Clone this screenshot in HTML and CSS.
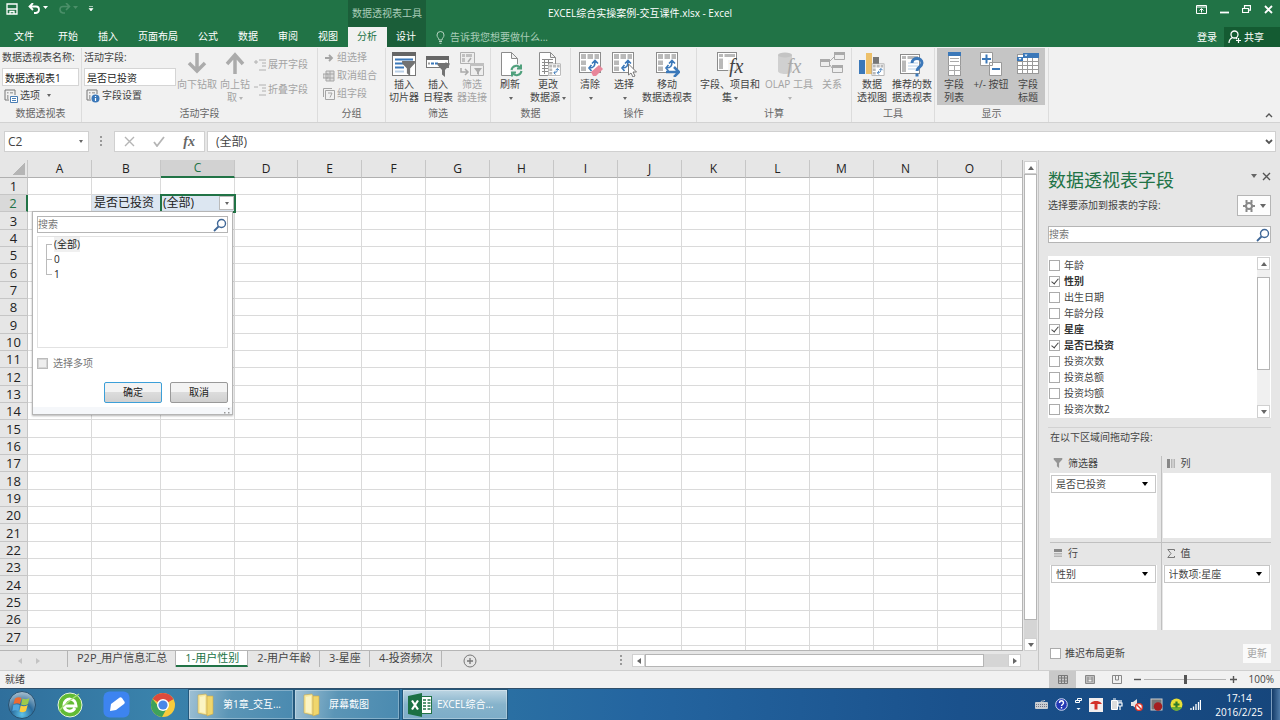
FILE: index.html
```html
<!DOCTYPE html>
<html lang="zh-CN">
<head>
    <meta charset="UTF-8">
    <meta name="viewport" content="width=device-width, initial-scale=1.0">
    <title>EXCEL综合实操案例-交互课件.xlsx - Excel</title>
    <link rel="stylesheet" href="styles.css">
</head>
<body>

<!-- Общие значки -->
<svg class="defs" width="0" height="0">
    <symbol id="pivot" viewBox="0 0 26 26">
        <rect x="2.500" y="1.500" width="21" height="20" fill="#fff" stroke="#8c8c8c"/>
        <path d="M4 3h5v5H4zM10.500 3H16v5h-5.500zM17.500 3H22v5h-4.500zM4 9.500h5V14H4zM4 15.500h5V20H4z" fill="#b9b9b9"/>
        <path d="M12 17c5 0 6-2 6-7M14.500 14L12 17l2.500 3M15 12.500l3-3 3 3" fill="none" stroke="#3b78b9" stroke-width="1.600"/>
    </symbol>
    <symbol id="funnel" viewBox="0 0 12 14">
        <path d="M0 0h12v2L7.500 7v7L4.500 11.500V7L0 2z" fill="#737373"/>
    </symbol>
    <symbol id="search" viewBox="0 0 14 14">
        <circle cx="8.500" cy="5.500" r="4" fill="none" stroke="#3f6797" stroke-width="1.400"/>
        <path d="M5.500 8.500L1 13" stroke="#3f6797" stroke-width="1.800"/>
    </symbol>
    <symbol id="folder" viewBox="0 0 24 24">
        <path d="M4 2l8-1 1 2v19l-9-2z" fill="#f7e9a0" stroke="#c9a94a" stroke-width=".6"/>
        <path d="M13 3l6 0v18l-6 2z" fill="#f0d66c" stroke="#c9a94a" stroke-width=".6"/>
        <path d="M6 4l5-1v17l-5-1z" fill="#fbf4c4"/>
    </symbol>
</svg>

<header class="header">
    <div class="quick">
        <button type="button" aria-label="保存"><svg width="12" height="12" viewBox="0 0 12 12"><path d="M1 1h10v10H1zM1 6h10M4 11V8.500h4V11" fill="none" stroke="#fff" stroke-width="1.300"/></svg></button>
        <button type="button" aria-label="撤消"><svg width="20" height="12" viewBox="0 0 20 12"><path d="M5 0L1.500 3.500 5 7M2 3.500h6c4 0 4 6 0 6.500H6" fill="none" stroke="#fff" stroke-width="1.800"/><path d="M15 3h5l-2.500 3z" fill="#fff"/></svg></button>
        <button type="button" aria-label="恢复" disabled><svg width="20" height="12" viewBox="0 0 20 12"><path d="M8 0l3.500 3.500L8 7M11 3.500H5c-4 0-4 6 0 6.500h2" fill="none" stroke="#4b8f69" stroke-width="1.600"/><path d="M15 3h5l-2.500 3z" fill="#4b8f69"/></svg></button>
        <button type="button" aria-label="自定义"><svg width="6" height="6" viewBox="0 0 6 6"><path d="M1 .5h4M1 2.500h4L3 5z" stroke="#fff" stroke-width=".6" fill="#fff"/></svg></button>
    </div>
    <div class="context-title">数据透视表工具</div>
    <h1 class="title">EXCEL综合实操案例-交互课件.xlsx - Excel</h1>
    <div class="window-buttons">
        <button type="button" aria-label="功能区显示选项"><svg width="11" height="9" viewBox="0 0 11 9"><path d="M.5.5h10v8H.5zM.5 2h10M5.500 7.500V4M3.500 5.500l2-2 2 2" fill="none" stroke="#fff"/></svg></button>
        <button type="button" aria-label="最小化"><svg width="9" height="9" viewBox="0 0 9 9"><path d="M0 7.500h9" stroke="#fff" stroke-width="1.800"/></svg></button>
        <button type="button" aria-label="还原"><svg width="9" height="9" viewBox="0 0 9 9"><path d="M.5 3.500h6v4h-6zM2.500 3V.7h6v4.500H7" fill="none" stroke="#fff" stroke-width="1.200"/></svg></button>
        <button type="button" aria-label="关闭"><svg width="9" height="9" viewBox="0 0 9 9"><path d="M1 1l7 7M8 1L1 8" stroke="#fff" stroke-width="1.800"/></svg></button>
    </div>
    <nav class="tabs">
        <a href="#" class="file">文件</a>
        <a href="#">开始</a>
        <a href="#">插入</a>
        <a href="#">页面布局</a>
        <a href="#">公式</a>
        <a href="#">数据</a>
        <a href="#">审阅</a>
        <a href="#">视图</a>
    </nav>
    <nav class="context-tabs">
        <a href="#" class="active">分析</a>
        <a href="#">设计</a>
    </nav>
    <div class="tell-me">
        <label for="tell"><svg width="9" height="13" viewBox="0 0 9 13"><path d="M3 9C3 7 1 6.500 1 4a3.500 3.500 0 0 1 7 0c0 2.500-2 3-2 5zM3 10.500h3M3.500 12.300h2" fill="none" stroke="#b5d3c1"/></svg></label>
        <input type="text" id="tell" placeholder="告诉我您想要做什么..." aria-label="告诉我">
        <a href="#" class="login">登录</a>
        <button type="button" class="share"><svg width="14" height="14" viewBox="0 0 14 14"><circle cx="6.500" cy="4.500" r="3.500" fill="none" stroke="#fff" stroke-width="1.300"/><path d="M1 13c0-3 1.500-4.500 3.500-5.500M8 8l1 1M10.500 8v5M8 10.500h5" fill="none" stroke="#fff" stroke-width="1.200"/></svg>共享</button>
    </div>
</header>

<div class="ribbon">
    <section class="group group-name">
        <div class="group-main stack">
            <label for="pivotName">数据透视表名称:</label>
            <input type="text" id="pivotName" value="数据透视表1">
            <button type="button" class="small"><svg width="14" height="14" viewBox="0 0 14 14"><path d="M1 1h10v5M1 1v10h4" fill="none" stroke="#777"/><path d="M3 3h1.500v1.500H3zM6 3h3v1.500H6zM3 6h1.500v4H3z" fill="#aaa"/><path d="M6.500 7.500h7v6h-7zM8 9.500h4M8 11.500h4" fill="#fff" stroke="#4c7fb5"/></svg>选项<i class="caret"></i></button>
        </div>
        <h2>数据透视表</h2>
    </section>

    <section class="group group-field">
        <div class="group-main">
            <div class="stack">
                <label for="activeField">活动字段:</label>
                <input type="text" id="activeField" value="是否已投资">
                <button type="button" class="small"><svg width="14" height="14" viewBox="0 0 14 14"><path d="M1 1h10v4M1 1v10h4" fill="none" stroke="#777"/><path d="M3 3h1.500v1.500H3zM6 3h3v1.500H6zM3 6h1.500v4H3z" fill="#aaa"/><circle cx="9.500" cy="9.500" r="4" fill="#3b78b9"/><path d="M9.500 9v3M9.500 7v1" stroke="#fff" stroke-width="1.200"/></svg>字段设置</button>
            </div>
            <button type="button" class="big" disabled><svg width="26" height="26" viewBox="0 0 26 26"><path d="M13 2v18M5 12l8 8 8-8" fill="none" stroke="#ababab" stroke-width="3.500"/></svg><span>向下钻取</span></button>
            <button type="button" class="big" disabled><svg width="26" height="26" viewBox="0 0 26 26"><path d="M13 23V4M5 13l8-9 8 9" fill="none" stroke="#ababab" stroke-width="3.500"/></svg><span>向上钻<br>取<i class="caret"></i></span></button>
            <div class="pair">
                <button type="button" class="small" disabled><svg width="12" height="12" viewBox="0 0 12 12"><path d="M0 3h4M2 1v4M5 1h7M8 4h4M8 7h4M5 11h7" fill="none" stroke="#b0b0b0"/></svg>展开字段</button>
                <button type="button" class="small" disabled><svg width="12" height="12" viewBox="0 0 12 12"><path d="M0 3h4M5 1h7M8 4h4M8 7h4M5 11h7" fill="none" stroke="#b0b0b0"/></svg>折叠字段</button>
            </div>
        </div>
        <h2>活动字段</h2>
    </section>

    <section class="group group-set">
        <div class="group-main trio">
            <button type="button" class="small" disabled><svg width="12" height="12" viewBox="0 0 12 12"><path d="M2 6h7M6 3l3 3-3 3" fill="none" stroke="#a5a5a5" stroke-width="1.800"/></svg>组选择</button>
            <button type="button" class="small" disabled><svg width="12" height="12" viewBox="0 0 12 12"><path d="M3 1h8v10H3zM3 4h8M3 8h8M7 1v10M0 4h5v4H0z" fill="#ddd" stroke="#a5a5a5"/></svg>取消组合</button>
            <button type="button" class="small" disabled><svg width="12" height="12" viewBox="0 0 12 12"><path d="M.5 9V.5H9M2.500 2.500h9v9h-9zM5 5h4l-2 4.500" fill="none" stroke="#a5a5a5"/></svg>组字段</button>
        </div>
        <h2>分组</h2>
    </section>

    <section class="group group-filter">
        <div class="group-main">
            <button type="button" class="big"><svg width="26" height="26" viewBox="0 0 26 26"><rect x="1.500" y="1.500" width="23" height="23" fill="#fff" stroke="#777"/><path d="M1 1h24v4H1z" fill="#666"/><path d="M4 8.500h18M4 12.500h9M4 16.500h9" stroke="#3b78b9" stroke-width="2"/><path d="M4 20.500h9" stroke="#b8cfe6" stroke-width="2"/><use href="#funnel" x="11" y="10" width="13" height="15"/></svg><span>插入<br>切片器</span></button>
            <button type="button" class="big"><svg width="26" height="26" viewBox="0 0 26 26"><rect x="1.500" y="5.500" width="22" height="11" fill="#fff" stroke="#777"/><path d="M1 5h23v4H1z" fill="#666"/><path d="M3 12.500h2M20 12.500h2" stroke="#999" stroke-width="2"/><path d="M6 12.500h8" stroke="#3b78b9" stroke-width="2" stroke-dasharray="3 1"/><use href="#funnel" x="12" y="12" width="13" height="14"/></svg><span>插入<br>日程表</span></button>
            <button type="button" class="big" disabled><svg width="26" height="26" viewBox="0 0 26 26"><path d="M1.500 1.500h14v11h-14zM11.500 12.500h13v12h-13z" fill="#eee" stroke="#b0b0b0"/><path d="M3 3h3v3H3zM7 3h6v3H7zM3 7h3v4H3zM11 12h14v3H11z" fill="#c0c0c0"/><path d="M2 17v4h6M6 18l3 3-3 3M9 11l3-4" fill="none" stroke="#aaa" stroke-width="1.500"/><path d="M15 17h8l-3 4v3l-2-1v-2z" fill="#aaa"/></svg><span>筛选<br>器连接</span></button>
        </div>
        <h2>筛选</h2>
    </section>

    <section class="group group-data">
        <div class="group-main">
            <button type="button" class="big"><svg width="26" height="26" viewBox="0 0 26 26"><path d="M4.500 1.500h10l6 6v17h-16zM14.500 1.500v6h6" fill="#fff" stroke="#8c8c8c"/><circle cx="19.500" cy="19.500" r="6.500" fill="#f1f1f1"/><path d="M14.500 19a5 5 0 0 1 9-2M24.500 20a5 5 0 0 1-9 2M24 13.500v4h-4M15 25.500v-4h4" fill="none" stroke="#4fa07c" stroke-width="2"/></svg><span>刷新<br><i class="caret"></i></span></button>
            <button type="button" class="big"><svg width="26" height="26" viewBox="0 0 26 26"><path d="M4.500 1.500h11l5 5v18h-16zM15.500 1.500v5h5M7 8.500h11M7 11.500h11M7 14.500h11M7 17.500h7M7 20.500h7M9.500 8v15M13.500 8v15" fill="#fff" stroke="#8c8c8c"/><rect x="13" y="13" width="13" height="13" fill="#fff"/><use href="#pivot" x="12" y="12" width="15" height="15"/></svg><span>更改<br>数据源<i class="caret"></i></span></button>
        </div>
        <h2>数据</h2>
    </section>

    <section class="group group-action">
        <div class="group-main">
            <button type="button" class="big"><svg width="26" height="26" viewBox="0 0 26 26"><use href="#pivot" x="0" width="26" height="26"/><path d="M14 21l8-7 4 4-7 7h-3z" fill="#e8869a"/></svg><span>清除<br><i class="caret"></i></span></button>
            <button type="button" class="big"><svg width="26" height="26" viewBox="0 0 26 26"><use href="#pivot" x="-1" width="26" height="26"/><path d="M17.500 13v11l2.500-2 2 4 2-1-2-4h3.500z" fill="#fff" stroke="#777"/></svg><span>选择<br><i class="caret"></i></span></button>
            <button type="button" class="big"><svg width="26" height="26" viewBox="0 0 26 26"><use href="#pivot" width="26" height="26"/><path d="M12 21h12M20 16l5 5-5 5" fill="none" stroke="#3b78b9" stroke-width="2.500"/></svg><span>移动<br>数据透视表</span></button>
        </div>
        <h2>操作</h2>
    </section>

    <section class="group group-calc">
        <div class="group-main">
            <button type="button" class="big"><svg width="30" height="26" viewBox="0 0 30 26"><rect x="2.500" y="1.500" width="19" height="18" fill="#fff" stroke="#8c8c8c"/><path d="M4 3h4v3H4zM9.500 3H20v3H9.500zM4 7.500h4V18H4z" fill="#b9b9b9"/><path d="M13 9h12v17H13z" fill="#f1f1f1" opacity=".7"/><text x="14" y="22" class="fx-text">fx</text></svg><span>字段、项目和<br>集<i class="caret"></i></span></button>
            <button type="button" class="big" disabled><svg width="26" height="26" viewBox="0 0 26 26"><path d="M2 4v16c0 4 14 4 14 0V4" fill="#d0d0d0"/><ellipse cx="9" cy="4" rx="7" ry="2.500" fill="#c4c4c4"/><text x="11" y="22" class="fx-text fx-off">fx</text></svg><span>OLAP 工具<br><i class="caret"></i></span></button>
            <button type="button" class="big" disabled><svg width="26" height="26" viewBox="0 0 26 26"><path d="M15.500 1.500h10v7h-10zM1.500 8.500h9v7h-9zM13.500 14.500h10v7h-10z" fill="#eee" stroke="#aaa"/><path d="M15 1h11v3H15zM1 8h10v3H1zM13 14h11v3H13z" fill="#aaa"/><path d="M11 10l4-4M11 14l2 3" stroke="#aaa"/></svg><span>关系</span></button>
        </div>
        <h2>计算</h2>
    </section>

    <section class="group group-tools">
        <div class="group-main">
            <button type="button" class="big"><svg width="28" height="26" viewBox="0 0 28 26"><path d="M1 9h6v14H1z" fill="#3b78b9"/><path d="M8 2h6v21H8z" fill="#edc06a"/><path d="M15 6h6v8h-6z" fill="#777"/><use href="#pivot" x="12" y="12" width="16" height="15"/></svg><span>数据<br>透视图</span></button>
            <button type="button" class="big"><svg width="28" height="26" viewBox="0 0 28 26"><rect x="2.500" y="3.500" width="19" height="19" fill="#fff" stroke="#8c8c8c"/><path d="M4 5h4v3H4zM9.500 5H20v3H9.500zM4 9.500h4V21H4z" fill="#b9b9b9"/><path d="M10 12h10M10 15h10M10 18h10" stroke="#b8cfe6"/><path d="M14 12c0-6 10-6 10 0 0 4-5 4-5 8M19 22.500v3" fill="none" stroke="#3b78b9" stroke-width="3"/></svg><span>推荐的数<br>据透视表</span></button>
        </div>
        <h2>工具</h2>
    </section>

    <section class="group group-show">
        <div class="group-main">
            <button type="button" class="big on"><svg width="26" height="26" viewBox="0 0 26 26"><rect x="7.500" y="1.500" width="12" height="23" fill="#fff" stroke="#999"/><path d="M7 1h13v4H7z" fill="#3b78b9"/><path d="M9 7.500h9M9 10.500h9M7 14.500h13M7 19.500h13M13.500 14v11" stroke="#aaa"/></svg><span>字段<br>列表</span></button>
            <button type="button" class="big on"><svg width="26" height="26" viewBox="0 0 26 26"><path d="M2.500 1.500h12v13h-12zM11.500 11.500h12v13h-12z" fill="#fff" stroke="#999"/><path d="M4 8h9M8.500 3.500v9M14 18h8" stroke="#3b78b9" stroke-width="2"/></svg><span>+/- 按钮</span></button>
            <button type="button" class="big on"><svg width="26" height="26" viewBox="0 0 26 26"><rect x="2.500" y="3.500" width="21" height="19" fill="#fff" stroke="#999"/><path d="M2 10.500h22M2 14.500h22M2 18.500h22M7.500 7v16M12.500 7v16M17.500 7v16" stroke="#999"/><path d="M8 2h16v5H8zM2 6h6v4H2z" fill="#3b78b9"/><path d="M9.500 3.500h3L11 5.500zM3.500 7h3L5 9z" fill="#fff"/></svg><span>字段<br>标题</span></button>
        </div>
        <h2>显示</h2>
    </section>

    <button type="button" class="collapse" aria-label="折叠功能区"><svg width="8" height="6" viewBox="0 0 8 6"><path d="M1 5l3-3 3 3" fill="none" stroke="#555" stroke-width="1.400"/></svg></button>
</div>

<div class="formula-bar">
    <div class="name-box">
        <input type="text" value="C2" aria-label="名称框">
        <i class="caret"></i>
    </div>
    <span class="dots"></span>
    <div class="formula-buttons">
        <button type="button" aria-label="取消"><svg width="11" height="11" viewBox="0 0 11 11"><path d="M1 1l9 9M10 1l-9 9" stroke="#b5b5b5" stroke-width="1.400"/></svg></button>
        <button type="button" aria-label="输入"><svg width="12" height="11" viewBox="0 0 12 11"><path d="M1 6l3 4 7-9" fill="none" stroke="#b5b5b5" stroke-width="1.800"/></svg></button>
        <button type="button" class="fx">fx</button>
    </div>
    <div class="formula">
        <input type="text" value="(全部)" aria-label="编辑栏">
        <svg width="8" height="6" viewBox="0 0 8 6"><path d="M1 1l3 3 3-3" fill="none" stroke="#555" stroke-width="1.800"/></svg>
    </div>
</div>

<main class="workspace">
    <div class="book">
        <div class="sheet-area">
            <div class="sheet" id="sheet">
                <table id="grid"></table>

                <div class="filter-menu">
                    <div class="search-box">
                        <input type="text" placeholder="搜索" aria-label="搜索">
                        <svg width="14" height="14"><use href="#search"/></svg>
                    </div>
                    <ul class="tree">
                        <li><span class="chosen">(全部)</span></li>
                        <li>0</li>
                        <li>1</li>
                    </ul>
                    <label class="multi"><input type="checkbox">选择多项</label>
                    <div class="menu-buttons">
                        <button type="button" class="ok">确定</button>
                        <button type="button">取消</button>
                    </div>
                    <div class="grip"><svg width="6" height="6" viewBox="0 0 6 6"><path d="M4 0h1.500v1.500H4zM4 4h1.500v1.500H4zM0 4h1.500v1.500H0z" fill="#999"/></svg></div>
                </div>
            </div>
            <div class="scroll-v">
                <button type="button" aria-label="向上"><i class="tri up"></i></button>
                <span class="thumb"></span>
                <span class="track"></span>
                <button type="button" aria-label="向下"><i class="tri down"></i></button>
            </div>
        </div>
        <div class="sheet-bar">
            <div class="sheet-nav"><i class="tri left"></i><i class="tri right"></i></div>
            <nav class="sheet-tabs">
                <a href="#">P2P_用户信息汇总</a>
                <a href="#" class="active">1-用户性别</a>
                <a href="#">2-用户年龄</a>
                <a href="#">3-星座</a>
                <a href="#">4-投资频次</a>
            </nav>
            <button type="button" class="add" aria-label="新工作表"><svg width="14" height="14" viewBox="0 0 14 14"><circle cx="7" cy="7" r="6" fill="none" stroke="#777"/><path d="M7 4v6M4 7h6" stroke="#777" stroke-width="1.300"/></svg></button>
            <span class="dots"></span>
            <div class="scroll-h">
                <button type="button" aria-label="向左"><i class="tri left"></i></button>
                <span class="thumb"></span>
                <span class="track"></span>
                <button type="button" aria-label="向右"><i class="tri right"></i></button>
            </div>
        </div>
    </div>

    <aside class="pane">
        <div class="pane-head">
            <h2>数据透视表字段</h2>
            <button type="button" aria-label="选项"><i class="tri down"></i></button>
            <button type="button" aria-label="关闭"><svg width="9" height="9" viewBox="0 0 9 9"><path d="M1 1l7 7M8 1L1 8" stroke="#555" stroke-width="1.400"/></svg></button>
        </div>
        <div class="pane-sub">
            <span>选择要添加到报表的字段:</span>
            <button type="button" class="gear" aria-label="工具"><svg width="12" height="12" viewBox="0 0 12 12"><circle cx="6" cy="6" r="3" fill="none" stroke="#888" stroke-width="2"/><path d="M3.500 0v3M8.500 0v3M3.500 9v3M8.500 9v3M0 6h3M9 6h3" stroke="#888" stroke-width="2"/></svg><i class="tri down"></i></button>
        </div>
        <div class="search-box">
            <input type="text" placeholder="搜索" aria-label="搜索字段">
            <svg width="14" height="14"><use href="#search"/></svg>
        </div>
        <div class="fields">
            <div class="field-list">
                <label><input type="checkbox">年龄</label>
                <label><input type="checkbox" checked>性别</label>
                <label><input type="checkbox">出生日期</label>
                <label><input type="checkbox">年龄分段</label>
                <label><input type="checkbox" checked>星座</label>
                <label><input type="checkbox" checked>是否已投资</label>
                <label><input type="checkbox">投资次数</label>
                <label><input type="checkbox">投资总额</label>
                <label><input type="checkbox">投资均额</label>
                <label><input type="checkbox">投资次数2</label>
            </div>
            <div class="scroll-v">
                <button type="button" aria-label="向上"><i class="tri up"></i></button>
                <span class="track"></span>
                <span class="thumb"></span>
                <span class="track"></span>
                <button type="button" aria-label="向下"><i class="tri down"></i></button>
            </div>
        </div>
        <p class="drag-hint">在以下区域间拖动字段:</p>
        <div class="areas">
            <section>
                <h3><svg width="10" height="10" class="dim"><use href="#funnel"/></svg>筛选器</h3>
                <div class="drop"><div class="chip"><select aria-label="筛选器"><option>是否已投资</option></select></div></div>
            </section>
            <section>
                <h3><svg width="10" height="9" viewBox="0 0 10 9"><path d="M1 0h3v9H1z" fill="#888"/><path d="M5 0h1.500v9H5zM7.500 0H9v9H7.500z" fill="#b5b5b5"/></svg>列</h3>
                <div class="drop"></div>
            </section>
            <section>
                <h3><svg width="10" height="8" viewBox="0 0 10 8"><path d="M1 0h8v3H1z" fill="#888"/><path d="M1 4h8v1.500H1zM1 6.500h8V8H1z" fill="#b5b5b5"/></svg>行</h3>
                <div class="drop"><div class="chip"><select aria-label="行"><option>性别</option></select></div></div>
            </section>
            <section>
                <h3><svg width="10" height="9" viewBox="0 0 10 9"><path d="M8.500 2V.5H1.800L5 4.500 1.800 8.500h6.700V7" fill="none" stroke="#777"/></svg>值</h3>
                <div class="drop"><div class="chip"><select aria-label="值"><option>计数项:星座</option></select></div></div>
            </section>
        </div>
        <div class="pane-foot">
            <label><input type="checkbox">推迟布局更新</label>
            <button type="button" disabled>更新</button>
        </div>
    </aside>
</main>

<footer class="status">
    <span class="ready">就绪</span>
    <button type="button" class="view on" aria-label="普通"><svg width="10" height="9" viewBox="0 0 10 9"><path d="M.5.5h9v8h-9zM.5 3h9M.5 6h9M3.500 0v9M6.500 0v9" fill="none" stroke="#777"/></svg></button>
    <button type="button" class="view" aria-label="页面布局"><svg width="10" height="9" viewBox="0 0 10 9"><path d="M.5.5h9v8h-9zM3 2h4v5H3zM3 4h4M2 0v9M8 0v9" fill="none" stroke="#888"/></svg></button>
    <button type="button" class="view" aria-label="分页预览"><svg width="10" height="9" viewBox="0 0 10 9"><path d="M.5.5h9v8h-9zM3.500 0v5h3V0" fill="none" stroke="#888"/></svg></button>
    <button type="button" class="zoom-btn" aria-label="缩小"><svg width="7" height="7" viewBox="0 0 7 7"><path d="M0 3.500h7" stroke="#555" stroke-width="1.400"/></svg></button>
    <input type="range" min="0" max="100" value="50" aria-label="缩放">
    <button type="button" class="zoom-btn" aria-label="放大"><svg width="7" height="7" viewBox="0 0 7 7"><path d="M0 3.500h7M3.500 0v7" stroke="#555" stroke-width="1.400"/></svg></button>
    <span class="percent">100%</span>
</footer>

<div class="taskbar">
    <div class="launch">
        <button type="button" aria-label="开始"><svg width="30" height="30" viewBox="0 0 30 30">
            <defs><radialGradient id="orb" cx=".5" cy=".85" r=".8"><stop offset="0" stop-color="#5fc4ea"/><stop offset=".5" stop-color="#2a6b9c"/><stop offset="1" stop-color="#9fb9cb"/></radialGradient></defs>
            <circle cx="15" cy="15" r="13.500" fill="url(#orb)" stroke="#27506f"/>
            <path d="M8 8.500c2.500-1.500 4.500-1.500 6.500-.5L13 14c-2-1-4-1-6.500 0z" fill="#ee6a32"/>
            <path d="M15.500 8.500c2 1 4.500 1 7-.5L21 14c-2.500 1.500-4.500 1.500-7 .5z" fill="#9ccb4c"/>
            <path d="M6.300 15c2.500-1 4.500-1 6.500 0l-1.500 6c-2-1-4-1-6 0z" fill="#4fa6df"/>
            <path d="M13.700 15.500c2 1 4.500 1 7-.5L19 21c-2.500 1.500-4.500 1.500-6.500.5z" fill="#fbcd3f"/>
        </svg></button>
        <button type="button" aria-label="浏览器"><svg width="26" height="26" viewBox="0 0 26 26"><circle cx="13" cy="13" r="12" fill="#62bb35" stroke="#e7f6dd"/><path d="M6 14h13c0-9-12-9-12-1 0 7 8 8 11 3" fill="none" stroke="#fff" stroke-width="3"/><path d="M2 19C8 12 16 6 22 2" fill="none" stroke="#a6df78" stroke-width="1.500"/></svg></button>
        <button type="button" aria-label="笔记"><svg width="27" height="27" viewBox="0 0 27 27"><rect x=".5" y=".5" width="26" height="26" rx="6" fill="#3d84f0"/><path d="M7 20l1-7 8-6c1-1 2-1 3 0l2 3c1 1 1 2 0 3l-8 6z" fill="#fff"/></svg></button>
        <button type="button" aria-label="Chrome"><svg width="26" height="26" viewBox="0 0 26 26"><circle cx="13" cy="13" r="12" fill="#f7cb3c"/><path d="M13 13L2.600 7A12 12 0 0 1 23.400 7z" fill="#dd4b3e"/><path d="M2.600 7A12 12 0 0 0 12 25l5-9-8-1z" fill="#3ea25a"/><path d="M13 7h10.400L13 13z" fill="#dd4b3e"/><circle cx="13" cy="13" r="6" fill="#fff"/><circle cx="13" cy="13" r="4.600" fill="#4a86e8"/></svg></button>
    </div>
    <button type="button" class="task"><svg width="24" height="24"><use href="#folder"/></svg>第1章_交互...</button>
    <button type="button" class="task"><svg width="24" height="24"><use href="#folder"/></svg>屏幕截图</button>
    <button type="button" class="task current"><svg width="24" height="24" viewBox="0 0 24 24"><rect x="12.500" y="3.500" width="11" height="17" fill="#fff" stroke="#217346"/><path d="M15 7h3M15 10h3M15 13h3M15 16h3M19.500 7h3M19.500 10h3M19.500 13h3M19.500 16h3" stroke="#217346" stroke-width="1.600"/><path d="M0 3l14-3v24L0 21z" fill="#1c7044"/><path d="M4 7.500l6 9M10 7.500l-6 9" stroke="#fff" stroke-width="2.200"/></svg>EXCEL综合...</button>
    <div class="tray">
        <svg width="13" height="9" viewBox="0 0 13 9"><rect y="2" width="13" height="7" rx="1" fill="#c9ced2"/><path d="M1 4.500h11M1 6.500h11" stroke="#778" stroke-dasharray="1 1"/><path d="M6 2c0-2 3 0 4-2" fill="none" stroke="#ccc"/></svg>
        <svg width="13" height="13" viewBox="0 0 13 13"><circle cx="6.500" cy="6.500" r="5.800" fill="#2338b5" stroke="#d5dcf5"/><path d="M4.500 5c0-3 4-3 4 0 0 1.500-2 1.500-2 3M6.500 9v1.500" fill="none" stroke="#fff" stroke-width="1.400"/></svg>
        <svg width="7" height="13" viewBox="0 0 7 13"><path d="M2.500.5h4v2h-4zM.5 2.500h4v2h-4z" fill="none" stroke="#fff"/><path d="M1.500 10h4L3.500 12z" fill="#fff"/></svg>
        <svg width="14" height="14" viewBox="0 0 14 14"><rect width="14" height="14" fill="#f3eeee"/><path d="M1 6c2-3 4-3 6-3s4 0 6 3H8.500v5.500h-3V6z" fill="#d33129"/></svg>
        <svg width="13" height="13" viewBox="0 0 13 13"><path d="M1.500 2.500h6v9h-6zM3 1h3" fill="#ddd" stroke="#fff"/><path d="M9 5V2M11 5V2M8 5h4v3h-4zM10 8v4" fill="none" stroke="#fff" stroke-width="1.200"/></svg>
        <svg width="13" height="13" viewBox="0 0 13 13"><path d="M1 4h2l4-3v10L3 8H1z" fill="#e4e4e4"/><circle cx="9" cy="9" r="3.400" fill="#fff" stroke="#d9372c" stroke-width="1.400"/><path d="M7 7l4 4" stroke="#d9372c" stroke-width="1.400"/></svg>
        <svg width="13" height="13" viewBox="0 0 13 13"><rect x="1" y="1" width="11" height="11" fill="#777" stroke="#ccc"/><circle cx="8" cy="8.500" r="4.200" fill="#a51f20"/></svg>
        <svg width="13" height="13" viewBox="0 0 13 13"><circle cx="6.500" cy="6.500" r="6" fill="#e9e037"/><path d="M1 9c2 5 9 5 11 0" fill="#6cae35"/><path d="M6.500 3.500v6M3.500 6.500h6" stroke="#2d7a2b" stroke-width="2.200"/></svg>
        <svg width="11" height="11" viewBox="0 0 11 11"><path d="M1 11V9M3.500 11V7.500M6 11V5M8.500 11V3M10.500 11V1" stroke="#fff" stroke-width="1.300"/></svg>
    </div>
    <div class="clock"><span>17:14</span><span>2016/2/25</span></div>
    <span class="desktop"></span>
</div>

<script src="script.js"></script>
</body>
</html>
```
FILE: styles.css
```css
* {
    box-sizing: border-box;
}
body {
    margin: 0;
    height: 100vh;
    display: flex;
    flex-direction: column;
    overflow: hidden;
    font-family: "Open Sans", "Noto Sans CJK SC", sans-serif;
    font-size: 10px;
    line-height: 13px;
    color: #444;
    background-color: #e6e6e6;
}
button, input, select {
    font: inherit;
    color: inherit;
    margin: 0;
    padding: 0;
    border: none;
    background: none;
    outline: none;
}
button {
    display: flex;
    align-items: center;
    justify-content: center;
    white-space: nowrap;
}
a {
    color: inherit;
    text-decoration: none;
}
h1, h2, h3, p, ul {
    margin: 0;
    padding: 0;
    font-size: 10px;
    font-weight: normal;
}
svg {
    display: block;
    flex: none;
}
.defs {
    position: absolute;
}
.caret {
    display: inline-block;
    border: 2px solid transparent;
    border-top: 3px solid #666;
    border-bottom: none;
    margin-left: 4px;
    vertical-align: middle;
}
button:disabled {
    color: #a3a3a3;
}
button:disabled .caret {
    border-top-color: #b5b5b5;
}
.tri {
    border: 3px solid transparent;
}
.tri.up { border-bottom: 4px solid #666; border-top: none; }
.tri.down { border-top: 4px solid #666; border-bottom: none; }
.tri.left { border-right: 4px solid #666; border-left: none; }
.tri.right { border-left: 4px solid #666; border-right: none; }
.dots {
    width: 2px;
    height: 11px;
    background: repeating-linear-gradient(#999 0 2px, transparent 2px 4px);
}

/* Шапка */
.header {
    display: grid;
    grid-template-columns: auto auto 1fr;
    grid-template-rows: 27px 20px;
    background-color: #217346;
    color: #fff;
    flex: none;
}
.quick {
    grid-area: 1 / 1;
    display: flex;
    align-items: center;
    gap: 10px;
    padding: 0 0 9px 6px;
}
.context-title {
    grid-area: 1 / 2;
    background-color: #1b5e39;
    color: #a9cdb8;
    text-align: center;
    line-height: 26px;
}
.title {
    grid-area: 1 / 1 / 2 / 4;
    justify-self: center;
    line-height: 26px;
}
.window-buttons {
    grid-area: 1 / 3;
    justify-self: end;
    display: flex;
    gap: 13px;
    padding: 0 7px 9px 0;
}
.tabs, .context-tabs {
    display: flex;
    line-height: 18px;
}
.tabs a {
    padding: 0 10px;
}
.tabs .file {
    padding: 0 14px;
}
.context-tabs {
    background-color: #1b5e39;
}
.context-tabs a {
    padding: 0 10px 0 9px;
}
.context-tabs .active {
    background-color: #f1f1f1;
    color: #217346;
}
.tell-me {
    display: flex;
    align-items: center;
}
.tell-me label {
    padding: 0 5px 0 10px;
}
.tell-me input {
    flex: 1;
}
.tell-me input::placeholder {
    color: #a9cdb8;
}
.login {
    padding: 0 7px;
}
.share {
    width: 56px;
    height: 20px;
    background-color: #145b32;
    gap: 2px;
    justify-content: flex-start;
    padding-left: 4px;
}

/* Лента */
.ribbon {
    flex: none;
    display: flex;
    background-color: #f1f1f1;
    border-bottom: 1px solid #d2d2d2;
    padding-top: 1px;
}
.group {
    border-right: 1px solid #dcdcdc;
}
.group h2 {
    line-height: 17px;
    text-align: center;
    color: #666;
}
.group-main {
    display: flex;
    height: 57px;
}
.big {
    flex-direction: column;
    justify-content: flex-start;
    gap: 1px;
    padding-top: 3px;
    flex: none;
    width: 34px;
}
.big span {
    text-align: center;
}
.big .caret {
    margin-left: 2px;
}
.big.on {
    background-color: #c5c5c5;
}
.small {
    gap: 2px;
    justify-content: flex-start;
    height: 17px;
}
.stack {
    display: flex;
    flex-direction: column;
    padding: 3px 2px 0;
}
.stack input {
    background-color: #fff;
    border: 1px solid #d5d5d5;
    height: 18px;
    margin: 4px 0 1px;
    padding-left: 2px;
    color: #222;
}
.stack .small {
    padding-left: 2px;
}
.group-name { width: 82px; }
.group-name .caret { margin-left: 5px; }
.group-field { width: 236px; }
.group-field .stack { width: 96px; }
.group-field .big { width: 38px; }
.pair, .trio {
    display: flex;
    flex-direction: column;
    padding: 8px 0 0;
    gap: 8px;
}
.group-set { width: 68px; }
.trio {
    padding: 1px 0 0 5px;
    gap: 1px;
}
.group-filter { width: 105px; }
.group-filter .group-main { padding-left: 1px; }
.group-data { width: 80px; }
.group-data .big { width: 38px; }
.group-action { width: 126px; }
.group-action .big:nth-child(1) { width: 38px; }
.group-action .big:nth-child(2) { width: 30px; }
.group-action .big:nth-child(3) { width: 56px; }
.group-calc { width: 155px; }
.group-calc .big:nth-child(1) { width: 66px; }
.group-calc .big:nth-child(2) { width: 52px; }
.group-tools { width: 83px; }
.group-tools .big { width: 40px; }
.group-show { width: 114px; }
.group-show .group-main { padding-left: 2px; }
.group-show .big:nth-child(2) { width: 40px; }
.fx-text {
    font: italic 20px "Liberation Serif", serif;
    fill: #444;
}
.fx-off {
    fill: #aaa;
}
.collapse {
    margin-left: auto;
    align-self: flex-end;
    padding: 0 7px 4px 0;
}

/* Строка формул */
.formula-bar {
    flex: none;
    display: flex;
    align-items: center;
    padding: 8px 4px;
    font-size: 12px;
}
.name-box, .formula-buttons, .formula {
    display: flex;
    align-items: center;
    height: 21px;
    background-color: #fff;
    border: 1px solid #d0d0d0;
}
.name-box {
    width: 85px;
    padding: 0 5px 0 3px;
}
.name-box input {
    flex: 1;
    min-width: 0;
}
.formula-bar .dots {
    margin: 0 12px 0 11px;
}
.formula-buttons {
    width: 91px;
    justify-content: space-around;
}
.fx {
    font: italic bold 14px "Liberation Serif", serif;
    color: #666;
}
.formula {
    flex: 1;
    margin-left: 2px;
    padding: 0 2px 0 8px;
}
.formula input {
    flex: 1;
}

/* Лист */
.workspace {
    flex: 1;
    min-height: 0;
    display: flex;
}
.book {
    flex: 1;
    min-width: 0;
    display: flex;
    flex-direction: column;
}
.sheet-area {
    flex: 1;
    min-height: 0;
    display: flex;
}
.sheet {
    position: relative;
    flex: 1;
    min-width: 0;
    overflow: hidden;
    background-color: #fff;
    border-right: 1px solid #b5b5b5;
    border-bottom: 1px solid #b5b5b5;
}
#grid {
    border-collapse: separate;
    border-spacing: 0;
    table-layout: fixed;
    width: 0;
    font-size: 12px;
    color: #222;
}
#grid th, #grid td {
    padding: 0;
    height: 17px;
    line-height: 16px;
    border-right: 1px solid #dadada;
    border-bottom: 1px solid #dadada;
    white-space: nowrap;
}
#grid tbody tr:nth-child(3n) > * {
    height: 18px;
}
#grid th {
    background-color: #e6e6e6;
    font-weight: normal;
    border-color: #c6c6c6;
}
#grid tbody th {
    font-size: 13px;
}
#grid thead th {
    height: 18px;
    border-bottom-color: #b0b0b0;
}
#grid thead th.picked {
    background-color: #d2d2d2;
    color: #217346;
    border-bottom: 2px solid #217346;
}
#grid tbody th.picked {
    background-color: #d9d9d9;
    color: #217346;
    border-right: 2px solid #217346;
}
.corner {
    background-image: linear-gradient(135deg, transparent 50%, #b5b5b5 50%);
    background-size: 12px 12px;
    background-position: right 2px bottom 2px;
    background-repeat: no-repeat;
}
#grid .filled {
    background-color: #dce6f1;
    padding-left: 2px;
}
#grid .current {
    outline: 2px solid #217346;
    outline-offset: -1px;
}
.cell {
    display: flex;
    justify-content: space-between;
    height: 16px;
}
.cell button {
    width: 15px;
    height: 14px;
    margin-top: 1px;
    background-color: #fff;
    border: 1px solid #bbb;
}
.cell .caret {
    margin: 0;
}
.filter-menu {
    position: absolute;
    left: 32px;
    top: 51px;
    width: 201px;
    padding: 4px 4px 0;
    background-color: #fff;
    border: 1px solid #b5b5b5;
    box-shadow: 0 1px 2px rgba(0, 0, 0, 0.3);
    color: #333;
}
.search-box {
    display: flex;
    align-items: center;
    height: 17px;
    background-color: #fff;
    border: 1px solid #b5b5b5;
}
.search-box input {
    flex: 1;
    min-width: 0;
}
.search-box input::placeholder {
    color: #777;
}
.tree {
    list-style: none;
    height: 112px;
    margin-top: 3px;
    padding: 0 8px;
    border: 1px solid #e2e2e2;
    color: #222;
}
.tree li {
    height: 15px;
    line-height: 15px;
    display: flex;
    align-items: center;
    gap: 2px;
    background: linear-gradient(#bbb, #bbb) 0 0 / 1px 100% no-repeat;
}
.tree li::before {
    content: "";
    width: 6px;
    border-top: 1px solid #bbb;
}
.tree li:first-child { background-position: 0 7px; }
.tree li:last-child { background-size: 1px 8px; }
.chosen {
    background-color: #f0f0f0;
}
.multi {
    display: flex;
    align-items: center;
    gap: 5px;
    margin-top: 9px;
    color: #777;
}
input[type="checkbox"] {
    appearance: none;
    position: relative;
    flex: none;
    width: 11px;
    height: 11px;
    background-color: #fff;
    border: 1px solid #ababab;
}
input[type="checkbox"]:checked::after {
    content: "";
    position: absolute;
    left: 3px;
    top: 0;
    width: 3px;
    height: 6px;
    border: solid #444;
    border-width: 0 1px 1px 0;
    transform: rotate(40deg);
}
.multi input[type="checkbox"] {
    border: 2px solid #d5d5d5;
    outline: 1px solid #bbb;
    outline-offset: -1px;
    background-color: #eee;
}
.menu-buttons {
    display: flex;
    justify-content: flex-end;
    gap: 8px;
    margin-top: 12px;
}
.menu-buttons button {
    width: 58px;
    height: 21px;
    border: 1px solid #999;
    border-radius: 2px;
    background: linear-gradient(#f3f3f3 50%, #dcdcdc 50%, #d0d0d0);
    color: #222;
}
.menu-buttons .ok {
    border-color: #3c9fd8;
}
.grip {
    display: flex;
    justify-content: flex-end;
    margin: 4px -4px 0;
    padding: 1px 2px 0;
    background-color: #f5f7fa;
}

/* Полосы прокрутки */
.scroll-v {
    flex: none;
    display: flex;
    flex-direction: column;
    width: 15px;
    padding: 1px 1px 0;
}
.scroll-v button, .scroll-h button {
    flex: none;
    width: 13px;
    height: 13px;
    background-color: #fff;
    border: 1px solid #d0d0d0;
}
.thumb {
    flex: 1;
    background-color: #fff;
    border: 1px solid #b5b5b5;
}
.track {
    background-color: #d5d5d5;
}
.sheet-area .track {
    height: 18px;
}
.sheet-bar {
    flex: none;
    display: flex;
    align-items: center;
    height: 19px;
    padding-right: 17px;
    font-size: 11px;
}
.sheet-nav {
    display: flex;
    gap: 14px;
    padding-left: 18px;
    width: 67px;
}
.sheet-nav .tri.left { border-right-color: #c3c3c3; }
.sheet-nav .tri.right { border-left-color: #c3c3c3; }
.sheet-tabs {
    display: flex;
    align-self: flex-start;
}
.sheet-tabs a {
    height: 16px;
    line-height: 14px;
    padding: 0 8px 0 9px;
    border-right: 1px solid #b5b5b5;
}
.sheet-tabs a:first-child {
    border-left: 1px solid #b5b5b5;
}
.sheet-tabs .active {
    background-color: #fff;
    color: #217346;
    border-bottom: 2px solid #217346;
}
.add {
    margin-left: 21px;
}
.sheet-bar .dots {
    margin-left: auto;
    margin-right: 10px;
}
.scroll-h {
    display: flex;
    width: 389px;
}
.scroll-h .track {
    width: 24px;
}

/* Панель полей */
.pane {
    flex: none;
    width: 242px;
    display: flex;
    flex-direction: column;
    border-left: 1px solid #c6c6c6;
    padding: 8px 9px 7px;
}
.pane-head, .pane-sub {
    display: flex;
    align-items: center;
}
.pane-head {
    gap: 5px;
    margin-bottom: 3px;
}
.pane-head button {
    margin-bottom: 8px;
}
.pane-head h2 {
    flex: 1;
    font-size: 18px;
    line-height: 24px;
    color: #217346;
}
.pane-sub {
    justify-content: space-between;
    margin-bottom: 10px;
}
.gear {
    width: 34px;
    height: 21px;
    gap: 5px;
    background-color: #fdfdfd;
    border: 1px solid #b5b5b5;
}
.fields {
    flex: 1;
    min-height: 0;
    display: flex;
    margin-top: 13px;
    background-color: #fff;
}
.field-list {
    flex: 1;
    overflow: hidden;
    padding-top: 1px;
}
.field-list label {
    display: flex;
    align-items: center;
    gap: 4px;
    height: 16px;
    padding-left: 1px;
}
.field-list label:has(:checked) {
    font-weight: bold;
    color: #333;
}
.fields .track {
    flex: 5;
    background-color: #f0f0f0;
}
.fields .thumb {
    flex: 13;
}
.fields .track:first-of-type {
    flex: 1;
}
.drag-hint {
    line-height: 18px;
    margin-top: 9px;
    padding-left: 2px;
    border-top: 1px solid #d2d2d2;
}
.areas {
    display: grid;
    grid-template-columns: 1fr 1fr;
    margin: 10px 0 0 2px;
}
.areas section {
    padding: 0 4px 4px 0;
    border-bottom: 1px solid #c0c0c0;
}
.areas section:nth-child(even) {
    padding: 0 0 4px 1px;
    border-left: 1px solid #c0c0c0;
}
.areas section:nth-child(n+3) {
    padding-bottom: 0;
    border-bottom: none;
}
.areas h3 {
    display: flex;
    align-items: center;
    gap: 5px;
    padding: 0 0 3px 3px;
    line-height: 14px;
}
.areas section:nth-child(n+3) h3 {
    padding: 3px 0 5px 3px;
}
.dim {
    opacity: 0.7;
}
.drop {
    height: 65px;
    padding: 2px 1px;
    background-color: #fff;
}
.areas section:nth-child(n+3) .drop {
    padding-top: 0;
}
.chip {
    position: relative;
    border: 1px solid #c6c6c6;
    height: 18px;
    display: flex;
}
.chip select {
    appearance: none;
    flex: 1;
    padding-left: 4px;
}
.chip::after {
    content: "";
    position: absolute;
    right: 7px;
    top: 6px;
    border: 3px solid transparent;
    border-top: 4px solid #000;
    border-bottom: none;
}
.pane-foot {
    display: flex;
    justify-content: space-between;
    align-items: center;
    margin-top: 14px;
    padding-left: 2px;
}
.pane-foot label {
    display: flex;
    align-items: center;
    gap: 4px;
}
.pane-foot button {
    width: 28px;
    height: 19px;
    background-color: #fafafa;
}

/* Строка состояния */
.status {
    flex: none;
    display: flex;
    align-items: center;
    height: 18px;
    background-color: #f1f1f1;
    border-top: 1px solid #cfcfcf;
    padding: 0 6px 0 5px;
}
.ready {
    flex: 1;
}
.view {
    width: 27px;
    height: 17px;
}
.view.on {
    background-color: #c9c9c9;
}
.zoom-btn {
    width: 14px;
    height: 17px;
}
.status input {
    appearance: none;
    width: 82px;
    height: 1px;
    background-color: #b5b5b5;
}
.status input::-webkit-slider-thumb {
    appearance: none;
    width: 3px;
    height: 9px;
    background-color: #555;
}
.percent {
    width: 34px;
    text-align: right;
}

/* Панель задач */
.taskbar {
    flex: none;
    display: flex;
    align-items: center;
    height: 32px;
    border-top: 1px solid #31506b;
    background: linear-gradient(90deg, #2f6f9c 0, #3a82ab 12%, #2d74a4 35%, #2465a0 50%, #1a518c 75%, #16467c);
    color: #fff;
}
.launch {
    display: flex;
    align-items: center;
    gap: 20px;
    width: 188px;
    padding-left: 7px;
}
.task {
    width: 106px;
    height: 31px;
    justify-content: flex-start;
    gap: 5px;
    padding-left: 5px;
    border: 1px solid #24587c;
    box-shadow: inset 0 0 0 1px rgba(255, 255, 255, 0.3);
    background: linear-gradient(100deg, #9fc1d5, #5b95b6 40%, #4a8ab0);
}
.task.current {
    margin-left: 2px;
    background: linear-gradient(#bcd5e3, #86b3cb 50%, #7cacc8);
}
.tray {
    margin-left: auto;
    display: flex;
    align-items: center;
    gap: 7px;
}
.clock {
    display: flex;
    flex-direction: column;
    align-items: center;
    width: 70px;
    padding-left: 6px;
    line-height: 14px;
}
.desktop {
    width: 9px;
    height: 31px;
    background: linear-gradient(90deg, #123a68, #4f7ba8);
    border-left: 1px solid #7c9dbd;
}
```
FILE: script.js
```js
const sheet = document.getElementById('sheet');
const grid = document.getElementById('grid');
const widths = { B: 69, C: 74, D: 63 };

function drawGrid() {
    // Сколько столбцов и строк помещается в окно
    const letters = [];
    let used = 28;
    for (let i = 0; i < 26 && used < sheet.clientWidth - 21; i++) {
        const letter = String.fromCharCode(65 + i);
        letters.push(letter);
        used += widths[letter] || 64;
    }
    const rows = Math.ceil((sheet.clientHeight - 18) * 3 / 52);

    // Заголовки столбцов
    let html = '<colgroup><col style="width: 28px">';
    letters.forEach(l => {
        html += `<col style="width: ${widths[l] || 64}px">`;
    });
    html += '<col style="width: 64px"></colgroup><thead><tr><th class="corner"></th>';
    letters.forEach(l => {
        html += `<th class="${l === 'C' ? 'picked' : ''}">${l}</th>`;
    });
    html += '<th></th></tr></thead><tbody>';

    // Строки
    for (let row = 1; row <= rows; row++) {
        html += `<tr><th class="${row === 2 ? 'picked' : ''}">${row}</th>`;
        letters.forEach(l => {
            if (row === 2 && l === 'B') {
                html += '<td class="filled">是否已投资</td>';
            } else if (row === 2 && l === 'C') {
                html += '<td class="filled current"><div class="cell">(全部)<button type="button" aria-label="筛选"><i class="caret"></i></button></div></td>';
            } else {
                html += '<td></td>';
            }
        });
        html += '<td></td></tr>';
    }
    grid.innerHTML = html + '</tbody>';
}

drawGrid();
window.addEventListener('resize', drawGrid);
```
